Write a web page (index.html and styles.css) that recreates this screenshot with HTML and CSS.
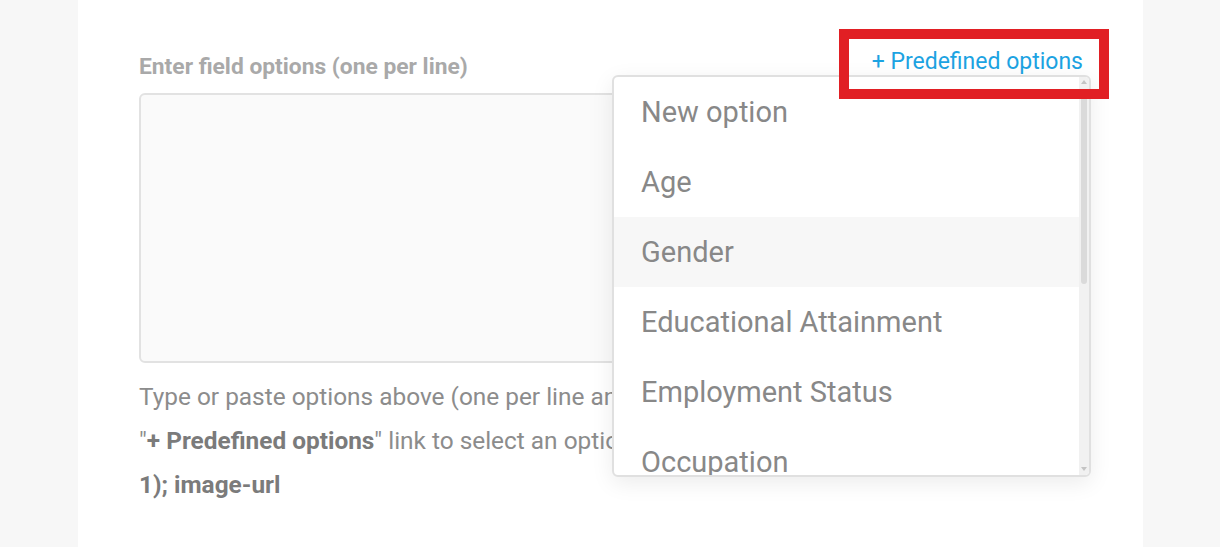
FILE: index.html
```html
<!DOCTYPE html>
<html lang="en">
<head>
<meta charset="utf-8">
<title>Field options</title>
<link rel="stylesheet" href="styles.css">
</head>
<body>
<div class="page">
  <div class="panel">
    <div class="field">
      <div class="field-head">
        <label class="field-label">Enter field options (one per line)</label>
        <a class="predef-link">+ Predefined options</a>
      </div>
      <textarea class="options-input"></textarea>
      <p class="hint">Type or paste options above (one per line and/or comma separated), or click the<br>"<b>+ Predefined options</b>" link to select an option group. Image format: <b>Label (value:</b><br><b>1); image-url</b></p>
      <div class="dropdown">
        <ul class="dropdown-list">
          <li class="dropdown-item">New option</li>
          <li class="dropdown-item">Age</li>
          <li class="dropdown-item is-hover">Gender</li>
          <li class="dropdown-item">Educational Attainment</li>
          <li class="dropdown-item">Employment Status</li>
          <li class="dropdown-item">Occupation</li>
        </ul>
        <div class="scrollbar">
          <span class="sb-up"></span>
          <span class="sb-thumb"></span>
          <span class="sb-down"></span>
        </div>
      </div>
    </div>
    <div class="annotation"></div>
  </div>
</div>
</body>
</html>
```

FILE: styles.css
```css
* { box-sizing: border-box; }
html, body { margin: 0; padding: 0; }
body {
  background: #f7f7f7;
  font-family: Roboto, "Noto Sans", "Liberation Sans", sans-serif;
  width: 1220px;
  height: 547px;
  overflow: hidden;
}
.page {
  display: flex;
  height: 547px;
  padding-left: 78px;
}
.panel {
  position: relative;
  width: 1065px;
  height: 547px;
  background: #ffffff;
  padding: 52px 60px 0 61px;
}
.field {
  position: relative;
}
.field-head {
  display: flex;
  justify-content: space-between;
  align-items: flex-end;
  height: 30px;
}
.field-label {
  font-size: 22.8px;
  line-height: 30px;
  font-weight: 700;
  color: #a9a9a9;
}
.predef-link {
  font-size: 23px;
  line-height: 30px;
  color: #1ca3e2;
  margin-bottom: 5px;
  text-decoration: none;
}
.options-input {
  display: block;
  width: 100%;
  height: 270px;
  margin-top: 11px;
  background: #fafafa;
  border: 2px solid #e2e2e2;
  border-radius: 6px;
  resize: none;
  outline: none;
}
.hint {
  margin: 12px 0 0;
  font-size: 24.4px;
  line-height: 44px;
  color: #8c8c8c;
  white-space: nowrap;
}
.hint b {
  color: #7b7b7b;
  font-weight: 700;
}
.dropdown {
  position: absolute;
  left: 473px;
  top: 23px;
  width: 479px;
  height: 402px;
  display: flex;
  background: #ffffff;
  border: 2px solid #e0e0e0;
  border-radius: 6px;
  box-shadow: 0 6px 22px rgba(0, 0, 0, 0.08);
  overflow: hidden;
  z-index: 2;
}
.dropdown-list {
  flex: 1;
  margin: 0;
  padding: 0;
  list-style: none;
  overflow: hidden;
}
.dropdown-item {
  height: 70px;
  line-height: 70px;
  padding-left: 27px;
  font-size: 29px;
  color: #888888;
  white-space: nowrap;
}
.dropdown-item.is-hover {
  background: #f7f7f7;
}
.scrollbar {
  width: 10px;
  flex: none;
  background: #f1f1f1;
  display: flex;
  flex-direction: column;
  align-items: center;
  padding: 3px 0 4px;
}
.sb-up {
  width: 0;
  height: 0;
  border-left: 3px solid transparent;
  border-right: 3px solid transparent;
  border-bottom: 4px solid #c4c4c4;
}
.sb-thumb {
  width: 6px;
  height: 195px;
  margin-top: 5px;
  background: #dadada;
  border-radius: 3px;
}
.sb-down {
  width: 0;
  height: 0;
  margin-top: auto;
  border-left: 3px solid transparent;
  border-right: 3px solid transparent;
  border-top: 4px solid #c4c4c4;
}
.annotation {
  position: absolute;
  left: 761px;
  top: 29px;
  width: 270px;
  height: 70px;
  border: 10px solid #e11f24;
  pointer-events: none;
  z-index: 3;
}
```
